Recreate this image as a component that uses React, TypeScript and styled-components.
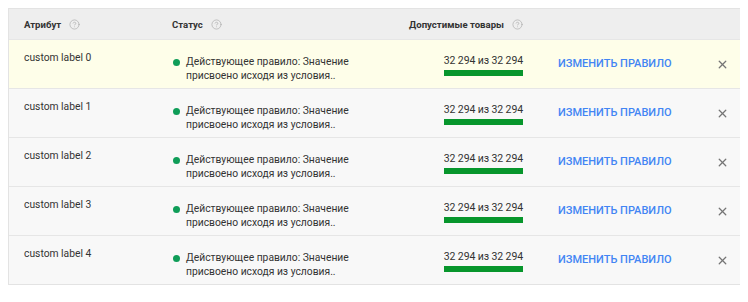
import React from "react";
import styled, { createGlobalStyle } from "styled-components";
import { CircleHelp, X } from "lucide-react";

const Global = createGlobalStyle`
  body { margin: 8px; background: #fff; font-family: Roboto, "Noto Sans", Arial, sans-serif; }
`;

const Table = styled.div`
  width: 734px;
  border: 1px solid #e3e3e3;
  box-shadow: 0 1px 2px rgba(0,0,0,0.12);
  box-sizing: border-box;
`;

const cols = "148px 231px 120px 1fr 36px";

const HeaderRow = styled.div`
  display: grid;
  grid-template-columns: ${cols};
  height: 30px;
  align-items: center;
  padding-left: 15px;
  background: #eeeeee;
  border-bottom: 1px solid #e6e6e6;
`;

const HeadCell = styled.div<{ $right?: boolean }>`
  display: flex;
  align-items: center;
  justify-content: ${(p) => (p.$right ? "flex-end" : "flex-start")};
  gap: 8px;
  font-size: 9.6px;
  font-weight: 700;
  color: #333;
  white-space: nowrap;
`;

const Row = styled.div<{ $active?: boolean }>`
  display: grid;
  grid-template-columns: ${cols};
  height: 48px;
  align-items: start;
  padding-left: 15px;
  background: ${(p) => (p.$active ? "#fefee9" : "#f8f8f8")};
  border-bottom: 1px solid #e6e6e6;
  &:last-child { border-bottom: none; }
  font-size: 11px;
  color: #333;
`;

const AttrCell = styled.div`
  padding-top: 10px;
  line-height: 16px;
  font-size: 10.3px;
`;

const StatusCell = styled.div`
  display: flex;
  align-items: flex-start;
  gap: 6px;
  padding-top: 15px;
  line-height: 14px;
  font-size: 10.3px;
`;

const Dot = styled.span`
  width: 7px;
  height: 7px;
  border-radius: 50%;
  background: #0f9d58;
  margin-top: 4px;
  margin-left: 1px;
  flex: none;
`;

const CountCell = styled.div`
  justify-self: end;
  display: flex;
  flex-direction: column;
  align-items: stretch;
  padding-top: 14px;
  line-height: 14px;
  font-size: 10.5px;
  letter-spacing: -0.1px;
`;

const Bar = styled.div`
  height: 6px;
  margin-top: 2px;
  background: #07962c;
`;

const ActionCell = styled.div`
  padding: 16px 0 0 35px;
  line-height: 16px;
  font-weight: 500;
  color: #4285f4;
  white-space: nowrap;
`;

const CloseCell = styled.div`
  padding-top: 18px;
  display: flex;
  color: #757575;
  padding-left: 11px;
`;

const rows = [0, 1, 2, 3, 4];

export default function App() {
  return (
    <>
      <Global />
      <Table>
        <HeaderRow>
          <HeadCell>
            Атрибут <CircleHelp size={11} color="#a8a8a8" strokeWidth={1.4} />
          </HeadCell>
          <HeadCell>
            Статус <CircleHelp size={11} color="#a8a8a8" strokeWidth={1.4} />
          </HeadCell>
          <HeadCell $right>
            Допустимые товары <CircleHelp size={11} color="#a8a8a8" strokeWidth={1.4} />
          </HeadCell>
          <div />
          <div />
        </HeaderRow>
        {rows.map((i) => (
          <Row key={i} $active={i === 0}>
            <AttrCell>custom label {i}</AttrCell>
            <StatusCell>
              <Dot />
              <div>
                Действующее правило: Значение
                <br />
                присвоено исходя из условия..
              </div>
            </StatusCell>
            <CountCell>
              32 294 из 32 294
              <Bar />
            </CountCell>
            <ActionCell>ИЗМЕНИТЬ ПРАВИЛО</ActionCell>
            <CloseCell>
              <X size={13} strokeWidth={2.4} />
            </CloseCell>
          </Row>
        ))}
      </Table>
    </>
  );
}
